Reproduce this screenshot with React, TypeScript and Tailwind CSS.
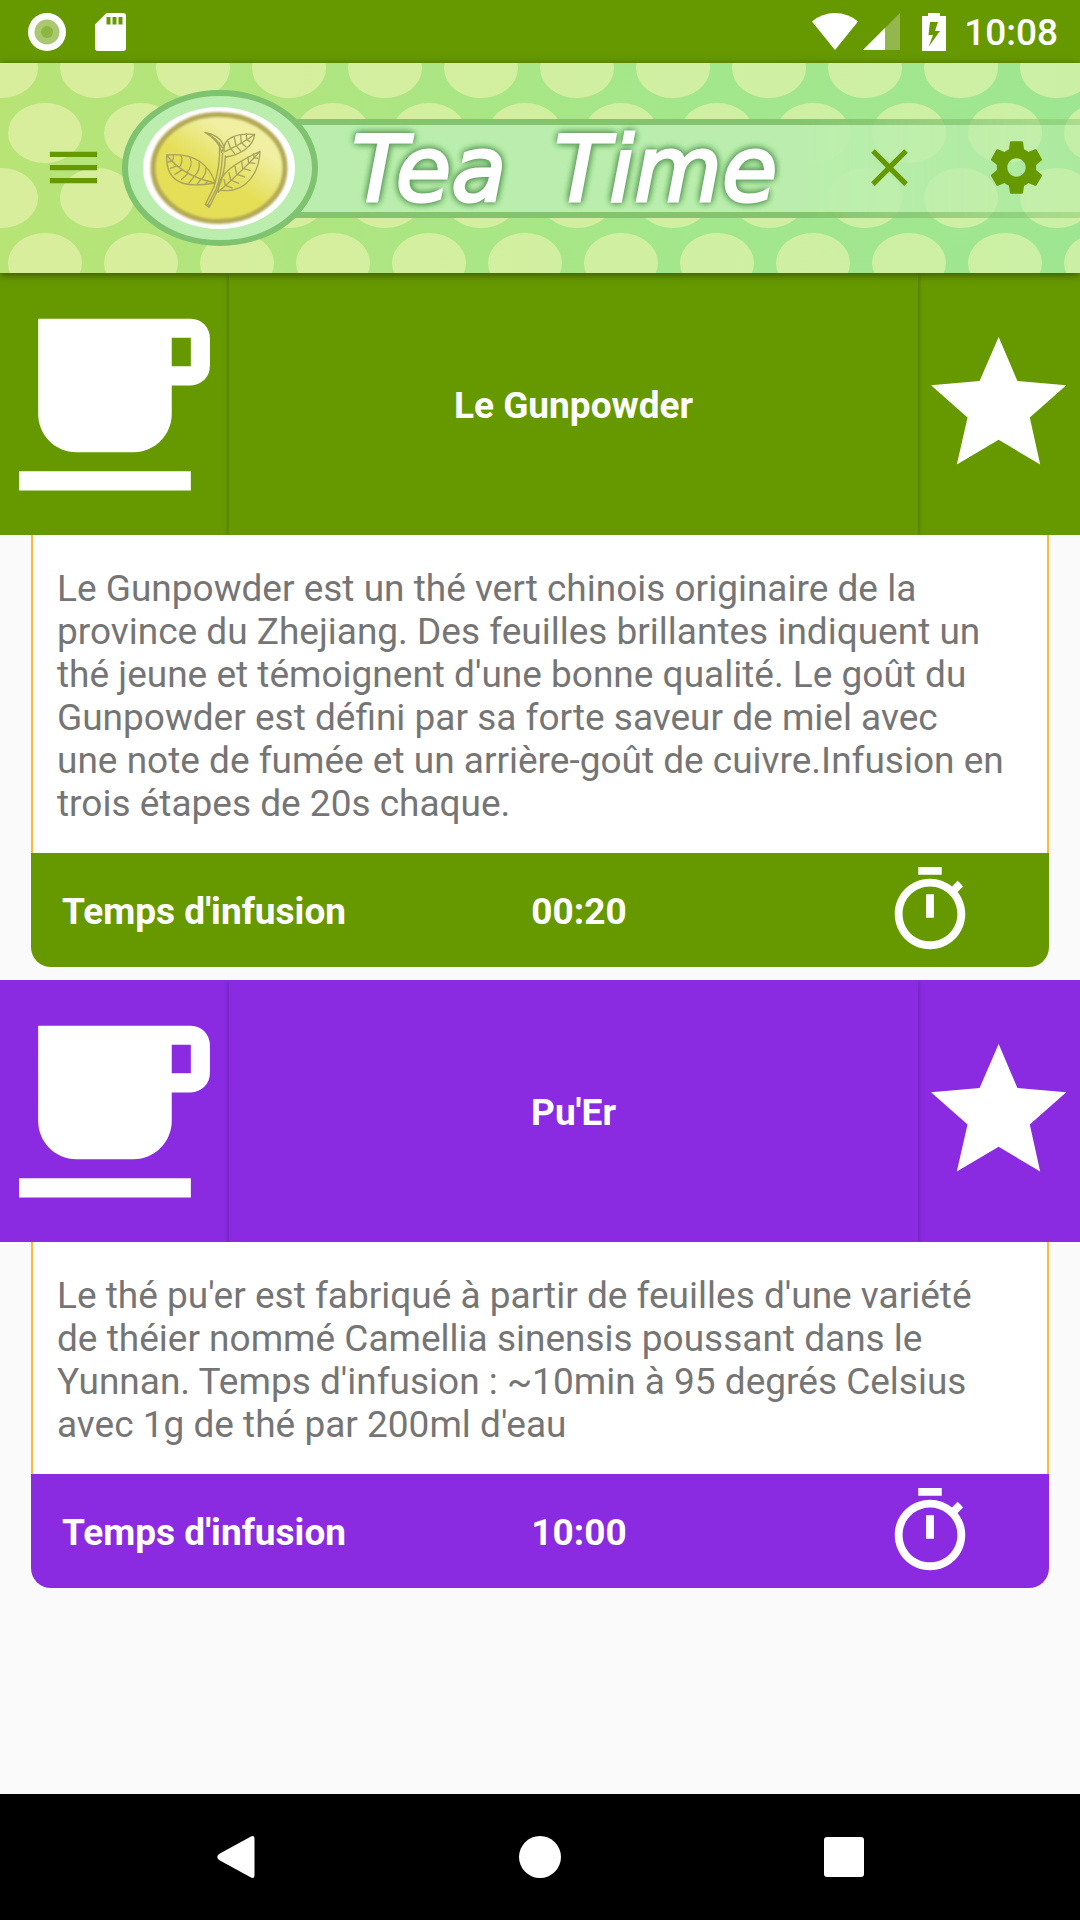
import type { ReactNode } from "react";

type Tea = {
  name: string;
  description: string;
  time: string;
  color: string;
};

const teas: Tea[] = [
  {
    name: "Le Gunpowder",
    description:
      "Le Gunpowder est un thé vert chinois originaire de la province du Zhejiang. Des feuilles brillantes indiquent un thé jeune et témoignent d'une bonne qualité. Le goût du Gunpowder est défini par sa forte saveur de miel avec une\u00a0note de fumée et un arrière-goût de cuivre.Infusion en trois étapes de 20s chaque.",
    time: "00:20",
    color: "bg-[#669900]",
  },
  {
    name: "Pu'Er",
    description:
      "Le thé pu'er est fabriqué à partir de feuilles d'une variété de théier nommé Camellia sinensis poussant dans le Yunnan. Temps d'infusion : ~10min à 95 degrés Celsius avec 1g de thé par 200ml d'eau",
    time: "10:00",
    color: "bg-[#8a2be2]",
  },
];

function Icon({ d, className }: { d: string; className: string }) {
  return (
    <svg viewBox="0 0 24 24" fill="currentColor" className={className} aria-hidden="true">
      <path d={d} />
    </svg>
  );
}

const MENU = "M3 18h18v-2H3v2zm0-5h18v-2H3v2zm0-7v2h18V6H3z";
const CLOSE =
  "M19 6.41L17.59 5 12 10.59 6.41 5 5 6.41 10.59 12 5 17.59 6.41 19 12 13.41 17.59 19 19 17.59 13.41 12z";
const SETTINGS =
  "M19.43 12.98c.04-.32.07-.64.07-.98s-.03-.66-.07-.98l2.11-1.65c.19-.15.24-.42.12-.64l-2-3.46c-.12-.22-.39-.3-.61-.22l-2.49 1c-.52-.4-1.08-.73-1.69-.98l-.38-2.65C14.46 2.18 14.25 2 14 2h-4c-.25 0-.46.18-.49.42l-.38 2.65c-.61.25-1.17.59-1.69.98l-2.49-1c-.23-.09-.49 0-.61.22l-2 3.46c-.13.22-.07.49.12.64l2.11 1.65c-.04.32-.07.65-.07.98s.03.66.07.98l-2.11 1.65c-.19.15-.24.42-.12.64l2 3.46c.12.22.39.3.61.22l2.49-1c.52.4 1.08.73 1.69.98l.38 2.65c.03.24.24.42.49.42h4c.25 0 .46-.18.49-.42l.38-2.65c.61-.25 1.17-.59 1.69-.98l2.49 1c.23.09.49 0 .61-.22l2-3.46c.12-.22.07-.49-.12-.64l-2.11-1.65zM12 15.5c-1.93 0-3.5-1.57-3.5-3.5s1.57-3.5 3.5-3.5 3.5 1.57 3.5 3.5-1.57 3.5-3.5 3.5z";
const CUP =
  "M20 3H4v10c0 2.21 1.79 4 4 4h6c2.21 0 4-1.79 4-4v-3h2c1.11 0 2-.9 2-2V5c0-1.11-.89-2-2-2zm0 5h-2V5h2v3zM2 21h18v-2H2v2z";
const TIMER =
  "M15 1H9v2h6V1zm-4 13h2V8h-2v6zm8.03-6.61l1.42-1.42c-.43-.51-.9-.99-1.41-1.41l-1.42 1.42C16.07 4.74 14.12 4 12 4c-4.97 0-9 4.03-9 9s4.02 9 9 9 9-4.03 9-9c0-2.12-.74-4.07-1.97-5.61zM12 20c-3.87 0-7-3.13-7-7s3.13-7 7-7 7 3.13 7 7-3.13 7-7 7z";

function StatusBar() {
  return (
    <div className="flex h-[63px] items-center bg-[#669900] pr-[22px] pl-7 text-white">
      <svg viewBox="0 0 38 38" className="size-[38px]" aria-hidden="true">
        <circle cx="19" cy="19" r="19" fill="#fff" />
        <circle cx="19" cy="19" r="12.5" fill="#a9c871" />
        <circle cx="19" cy="19" r="6" fill="#8db641" />
      </svg>
      <svg viewBox="0 0 31 38" className="ml-[29px] h-[38px] w-[31px]" aria-hidden="true">
        <path
          fill="#fff"
          fillRule="evenodd"
          d="M11.500 0H28a3 3 0 0 1 3 3v32a3 3 0 0 1-3 3H3a3 3 0 0 1-3-3V11.500zM11.500 4v7.500h4V4zm6 0v7.500h4V4zm6 0v7.500h4V4z"
        />
      </svg>
      <div className="ml-auto flex items-center">
        <svg viewBox="0 0 46 37" className="h-[37px] w-[46px]" aria-hidden="true">
          <path fill="#fff" d="M0 8.500Q10 0 23 0t23 8.500L23 37z" />
        </svg>
        <svg viewBox="0 0 37 37" className="ml-[5px] size-[37px]" aria-hidden="true">
          <path fill="#fff" fillOpacity=".3" d="M37 0v37H0z" />
          <path fill="#fff" d="M22 15v22H0z" />
        </svg>
        <svg viewBox="0 0 24 38" className="ml-[22px] h-[38px] w-6" aria-hidden="true">
          <path
            fill="#fff"
            fillRule="evenodd"
            d="M6 0h12v3h6v35H0V3h6zM8 9L6.500 22H11L6.500 34 18 18h-5l3-9z"
          />
        </svg>
        <span className="ml-[18px] pt-0.5 text-[37px] leading-[43px] font-medium">10:08</span>
      </div>
    </div>
  );
}

function DotsBackdrop() {
  return (
    <svg className="absolute inset-0 h-full w-full" aria-hidden="true">
      <defs>
        <linearGradient id="base" x1="0" x2="1" y1="0" y2="0">
          <stop offset="0" stopColor="#b8e476" />
          <stop offset="0.65" stopColor="#a3e78c" />
          <stop offset="1" stopColor="#9fe692" />
        </linearGradient>
        <linearGradient id="tint" x1="0" x2="1" y1="0" y2="0">
          <stop offset="0" stopColor="#d9ee9c" />
          <stop offset="1" stopColor="#cbf0a5" />
        </linearGradient>
        <pattern id="dots" width="96" height="130" patternUnits="userSpaceOnUse">
          <g fill="#fff">
            <ellipse cx="1" cy="5" rx="37" ry="30" />
            <ellipse cx="97" cy="5" rx="37" ry="30" />
            <ellipse cx="1" cy="135" rx="37" ry="30" />
            <ellipse cx="97" cy="135" rx="37" ry="30" />
            <ellipse cx="45" cy="70" rx="37" ry="30" />
          </g>
        </pattern>
        <mask id="dotMask">
          <rect width="100%" height="100%" fill="url(#dots)" />
        </mask>
      </defs>
      <rect width="100%" height="100%" fill="url(#base)" />
      <rect width="100%" height="100%" fill="url(#tint)" mask="url(#dotMask)" />
    </svg>
  );
}

function TeaBadge() {
  return (
    <svg
      viewBox="0 0 196 156"
      className="relative z-10 h-[156px] w-[196px] shrink-0"
      aria-hidden="true"
    >
      <defs>
        <linearGradient id="gold" x1="0.35" y1="0.75" x2="0.8" y2="0.15">
          <stop offset="0.3" stopColor="#e5df58" />
          <stop offset="0.8" stopColor="#f0efa2" />
        </linearGradient>
        <filter id="soft" x="-10%" y="-10%" width="120%" height="120%">
          <feGaussianBlur stdDeviation="1" />
        </filter>
      </defs>
      <ellipse cx="98" cy="78" rx="95" ry="75" fill="#bbeeae" stroke="#7fc270" strokeWidth="6" />
      <ellipse cx="97" cy="78" rx="76" ry="61" fill="#fff" />
      <ellipse cx="97" cy="78" rx="66" ry="53.500" fill="url(#gold)" />
      <ellipse
        cx="97"
        cy="78"
        rx="66"
        ry="53.500"
        fill="none"
        stroke="#b3a955"
        strokeWidth="5"
        filter="url(#soft)"
      />
      <g
        transform="translate(18 0) scale(.3333)"
        fill="none"
        stroke="#a9a35c"
        strokeWidth="4"
        strokeLinecap="round"
        strokeLinejoin="round"
      >
        <path d="M80 195c60-6 120 10 146 84-60 10-150 20-146-84zM80 195c30 40 80 70 146 84" />
        <path d="M97 213c4-5 5-10 3-18M118 232c9-12 10-24 5-36M140 248c14-14 16-32 10-45M163 259c12-12 17-28 14-41M185 267c8-8 13-20 12-32M97 213l-13 3M112 227l-21 8M127 239l-22 14M145 250l-20 18M163 259l-16 20M183 267l-12 16M203 274l-8 9" />
        <path d="M234 307c-4-60 60-90 126-123-2 60-40 130-120 116M236 305c40-36 80-70 124-121" />
        <path d="M256 286l-4-18M272 270l-5-22M290 253l-5-24M308 235l-3-20M326 218l-2-17M342 203l-1-12M256 286l20 8M272 270l24 10M290 253l24 8M308 235l22 6M326 218l18 2M342 203l12 2" />
        <path d="M252 186c-6-50 50-56 92-53-4 36-40 60-86 68M256 184c30-14 62-30 88-51" />
        <path d="M272 176l-8-22M288 167l-5-25M304 158l-2-24M320 149l-1-18M272 176l12 15M288 167l14 16M304 158l14 12M320 149l10 6" />
        <path d="M195 127c26 4 52 20 56 44l-6 16c-6-30-26-46-50-60zM198 128c22 12 38 26 48 44" />
        <path d="M238 160c4 56-6 92-16 130l-26 54 12 8 26-54c16-38 22-70 22-100M248 190c-2 40-6 74-20 108l-26 50M198 344l12 2" />
      </g>
    </svg>
  );
}

function AppBar() {
  return (
    <header className="relative z-20 flex h-[210px] items-center pb-px pl-[42px] text-[#669900] shadow-[0_2px_8px_rgba(0,0,0,0.45)]">
      <DotsBackdrop />
      <button type="button" aria-label="Menu" className="relative mr-[17px] size-[63px] shrink-0">
        <Icon d={MENU} className="size-[63px]" />
      </button>
      <TeaBadge />
      <div className="relative -ml-6 flex h-[99px] min-w-0 flex-1 items-center">
        <div className="absolute inset-x-0 top-px h-[99px] border-y-[6px] border-[#84c471] bg-[#bbeeae] [mask-image:linear-gradient(to_right,black_65%,rgba(0,0,0,0.45))]" />
        <h1 className="relative ml-[58px] flex gap-12 pt-1 text-[90px] leading-[99px] whitespace-nowrap text-white italic [font-family:'DejaVu_Sans',sans-serif] [-webkit-text-stroke:3px_white] [text-shadow:0_0_3px_#888,0_0_3px_#888,0_0_6px_#5fa35c,0_0_6px_#5fa35c,0_0_9px_#6aae66,0_0_9px_#6aae66,0_0_9px_#6aae66]">
          <span>Tea</span>
          <span>Time</span>
        </h1>
        <div className="relative ml-auto flex">
          <button
            type="button"
            aria-label="Fermer"
            className="flex h-[99px] w-[127px] items-center justify-center"
          >
            <Icon d={CLOSE} className="size-[63px]" />
          </button>
          <button
            type="button"
            aria-label="Paramètres"
            className="flex h-[99px] w-[127px] items-center justify-center"
          >
            <Icon d={SETTINGS} className="size-[63px]" />
          </button>
        </div>
      </div>
    </header>
  );
}

function TeaCard({ tea }: { tea: Tea }) {
  return (
    <article>
      <div className={`flex h-[262px] overflow-hidden text-white ${tea.color}`}>
        <div className="flex w-[229px] shrink-0 items-center">
          <Icon d={CUP} className="size-[229px]" />
        </div>
        <div
          className={`flex flex-1 items-center justify-center shadow-[0_2px_5px_rgba(0,0,0,0.3)] ${tea.color}`}
        >
          <h2 className="pt-0.5 text-[37px] leading-[43px] font-bold">{tea.name}</h2>
        </div>
        <button
          type="button"
          aria-label={`Favori ${tea.name}`}
          className="flex w-[162px] shrink-0 items-center pb-px"
        >
          <svg viewBox="596 160 484 484" fill="currentColor" className="size-[162px]" aria-hidden="true">
            <path d="M837 202L893 333 1039 346 930 442 961 583 837 509 712 583 744 442 635 346 780 333z" />
          </svg>
        </button>
      </div>
      <div className="mx-[31px]">
        <p className="border-x-2 border-[#ffbb33] bg-white pt-8 pr-9 pb-7 pl-6 text-[37px] leading-[43px] text-[#757575]">
          {tea.description}
        </p>
        <div
          className={`grid h-[114px] grid-cols-[316fr_464fr_238fr] items-center rounded-b-[20px] text-[37px] leading-[43px] font-bold text-white ${tea.color}`}
        >
          <span className="pt-0.5 pl-[31px] whitespace-nowrap">Temps d'infusion</span>
          <span className="pt-0.5 text-center">{tea.time}</span>
          <button
            type="button"
            aria-label={`Démarrer le minuteur ${tea.name}`}
            className="justify-self-center"
          >
            <Icon d={TIMER} className="size-[94px]" />
          </button>
        </div>
      </div>
    </article>
  );
}

function NavButton({ label, children }: { label: string; children: ReactNode }) {
  return (
    <button
      type="button"
      aria-label={label}
      className="flex h-full w-[304px] items-center justify-center"
    >
      <svg viewBox="0 0 42 42" fill="#fff" className="size-[42px]" aria-hidden="true">
        {children}
      </svg>
    </button>
  );
}

export default function App() {
  return (
    <div className="flex min-h-screen flex-col bg-[#fafafa] [font-family:Roboto,sans-serif]">
      <StatusBar />
      <AppBar />
      <main className="flex flex-1 flex-col gap-[13px]">
        {teas.map((tea) => (
          <TeaCard key={tea.name} tea={tea} />
        ))}
      </main>
      <nav className="flex h-[126px] justify-center bg-black" aria-label="Navigation">
        <NavButton label="Retour">
          <path d="M36 0.500Q39.500-1 39.500 3V39Q39.500 43 36 41.500L4 24Q0.500 21 4 18z" />
        </NavButton>
        <NavButton label="Accueil">
          <circle cx="21" cy="21" r="21" />
        </NavButton>
        <NavButton label="Applications récentes">
          <rect x="1" y="1" width="40" height="40" rx="3" />
        </NavButton>
      </nav>
    </div>
  );
}
